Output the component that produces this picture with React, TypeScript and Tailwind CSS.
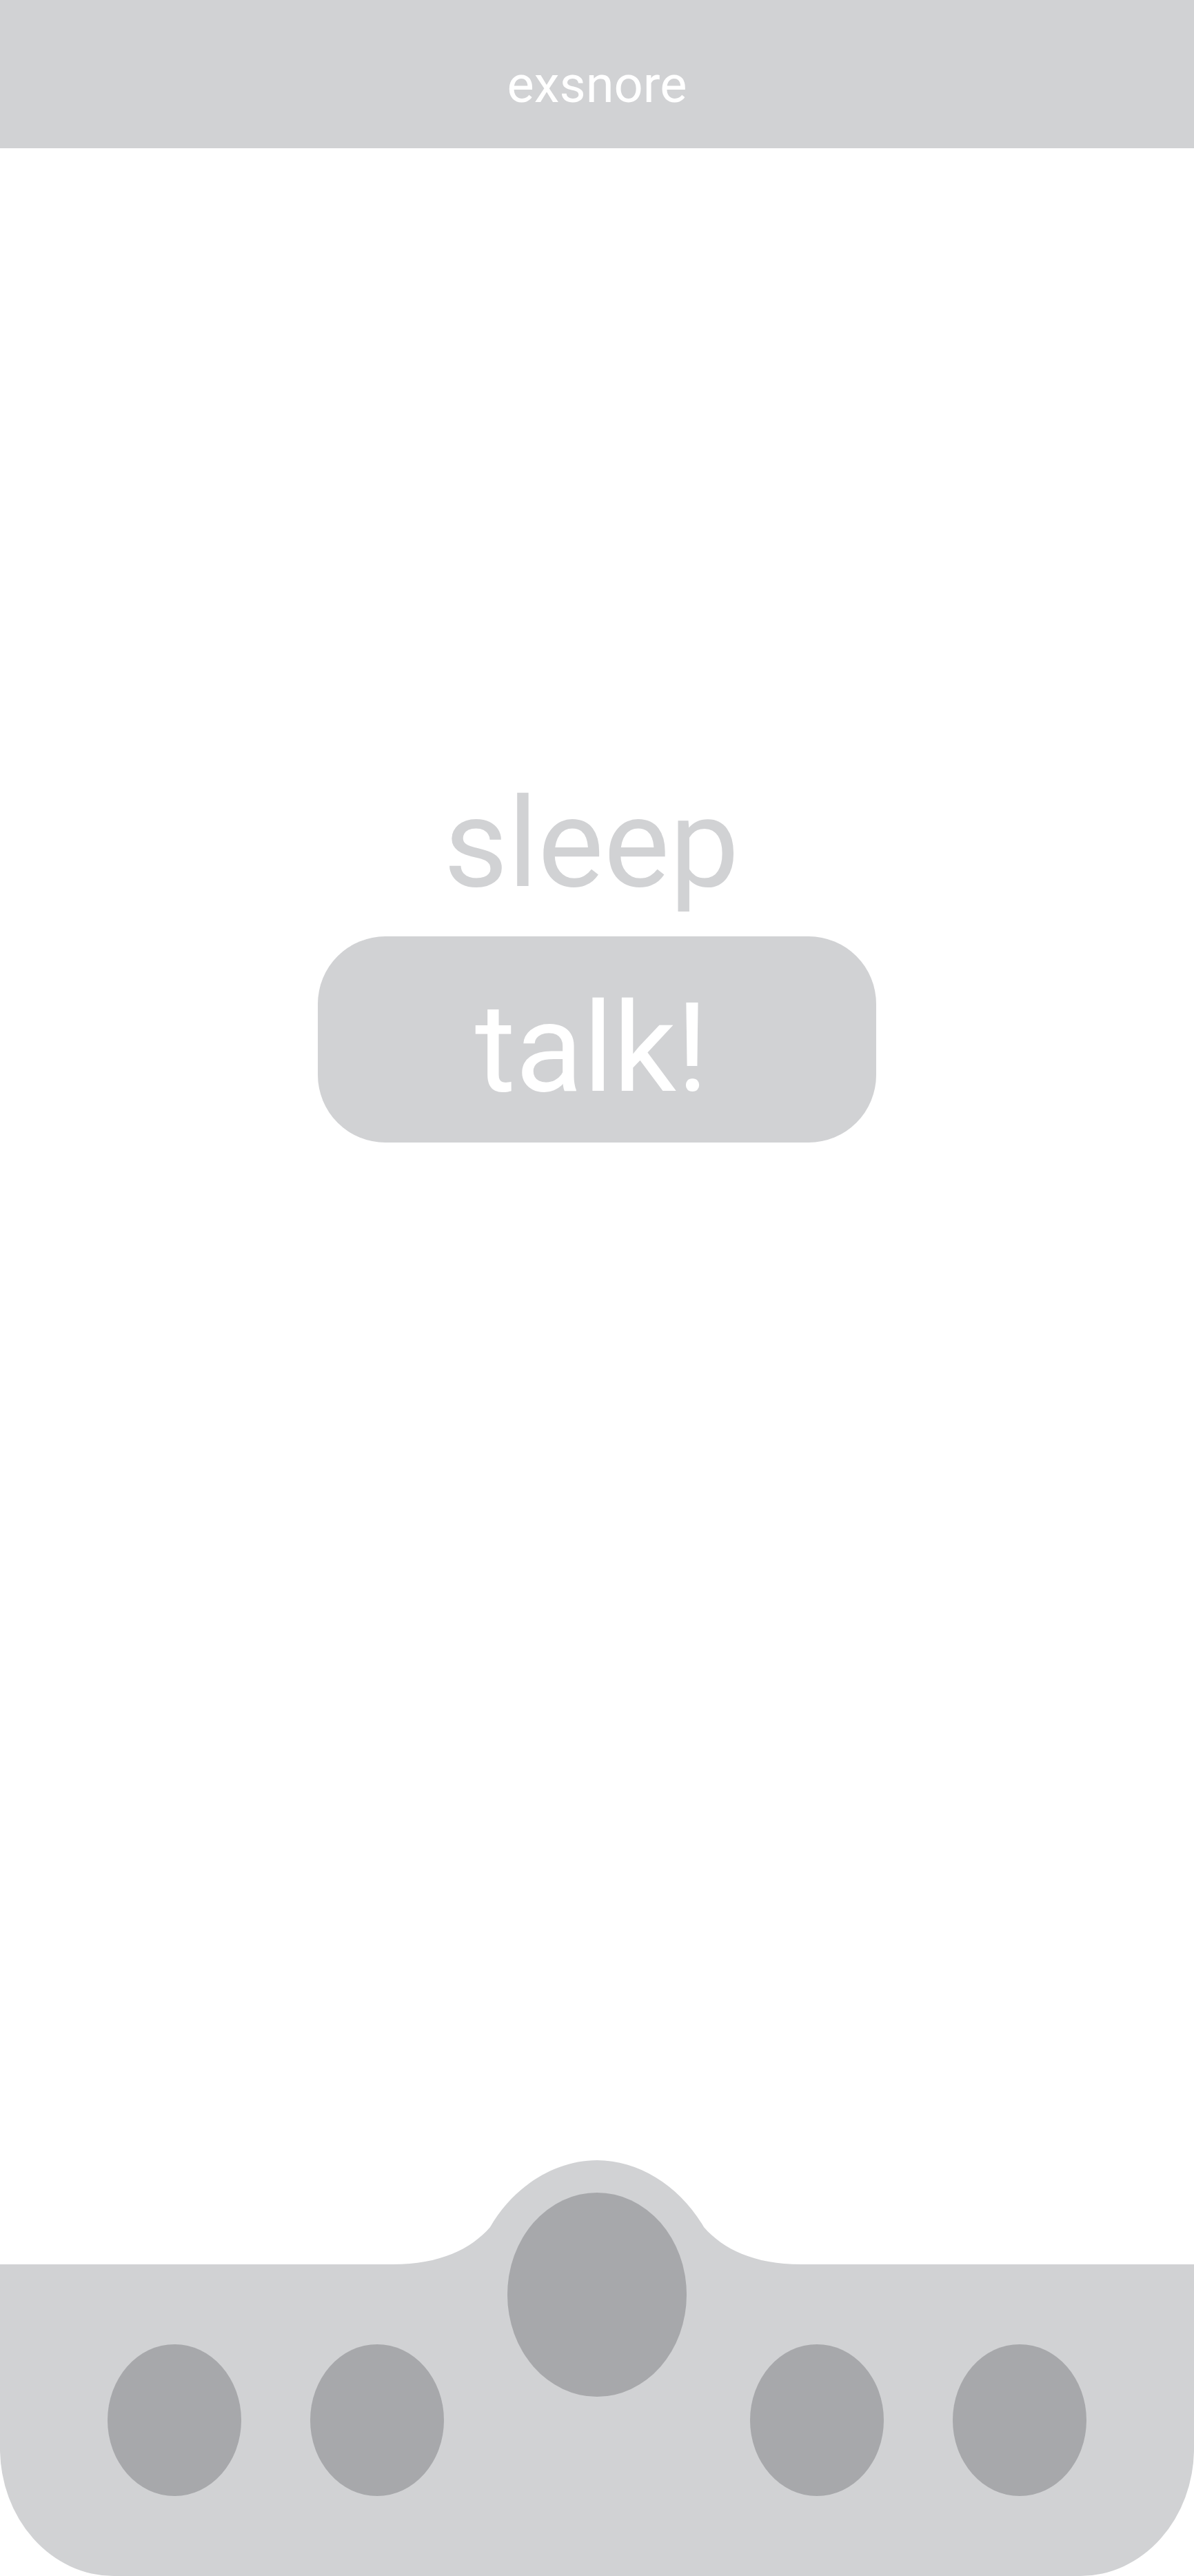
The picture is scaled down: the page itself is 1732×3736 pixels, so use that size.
type NavButtonProps = {
  label: string;
};

function NavButton({ label }: NavButtonProps) {
  return (
    <button
      type="button"
      aria-label={label}
      className="h-[220px] w-[194px] min-w-0 rounded-[50%] bg-[#a7a8ab]"
    />
  );
}

/* Raised shoulder of the bottom bar that carries the main button. */
function BarCrest() {
  return (
    <svg
      aria-hidden="true"
      viewBox="0 0 592 154"
      className="absolute bottom-full left-1/2 -mb-[2px] h-[154px] w-[592px] -translate-x-1/2 fill-[#d1d2d4]"
    >
      <path d="M0 152 C68 152 113 130 141 98 C175 39 235 1 296 1 C357 1 417 39 451 98 C479 130 524 152 592 152 V154 H0 Z" />
    </svg>
  );
}

export default function App() {
  return (
    <div className="flex min-h-screen flex-col bg-white font-['Roboto',sans-serif]">
      <header className="bg-[#d1d2d4] pt-[86px] pb-[55px] text-center text-white">
        <h1 className="text-[74px] leading-none font-normal">exsnore</h1>
      </header>

      <main className="flex flex-1 flex-col items-center gap-11 pt-[919px] text-[180px] leading-none">
        <p className="pr-4 text-[#d1d2d4]">sleep</p>
        <button
          type="button"
          className="w-full max-w-[810px] rounded-[98px] bg-[#d1d2d4] pt-[73px] pr-4 pb-[46px] text-center text-white"
        >
          talk!
        </button>
      </main>

      <nav
        aria-label="Main"
        className="relative flex justify-between rounded-br-[165px_185px] rounded-bl-[165px_185px] bg-[#d1d2d4] px-[9%] pb-[116px]"
      >
        <BarCrest />
        <div className="flex gap-[100px] pt-[116px]">
          <NavButton label="Home" />
          <NavButton label="History" />
        </div>
        <button
          type="button"
          aria-label="Record"
          className="relative -mt-[104px] h-[296px] w-[260px] rounded-[50%] bg-[#a7a8ab]"
        />
        <div className="flex gap-[100px] pt-[116px]">
          <NavButton label="Statistics" />
          <NavButton label="Settings" />
        </div>
      </nav>
    </div>
  );
}
